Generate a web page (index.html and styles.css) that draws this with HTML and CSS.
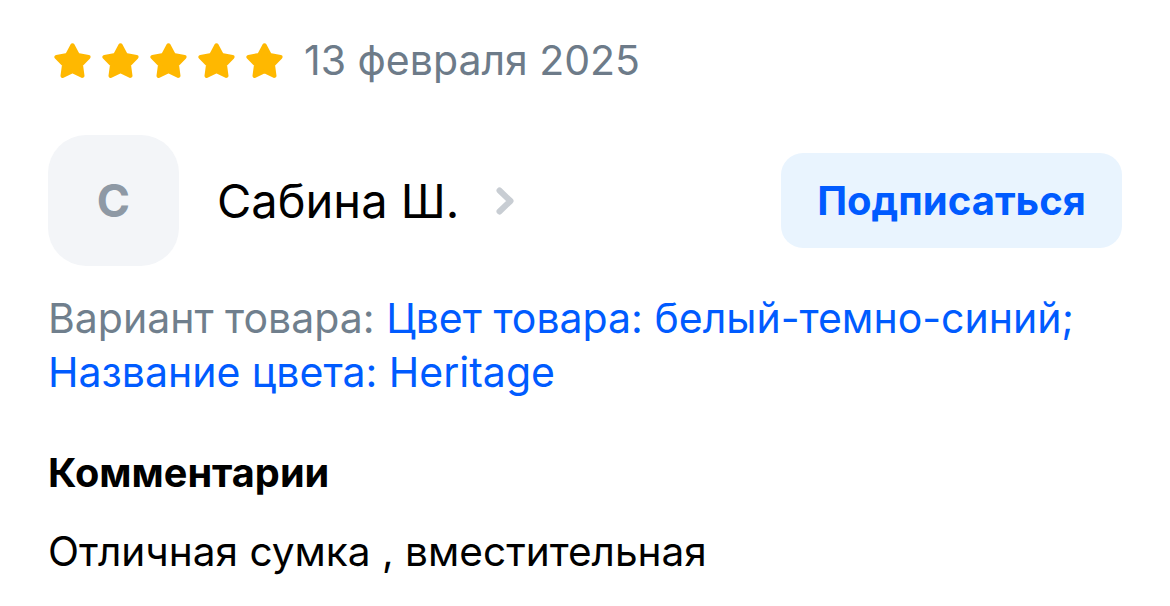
FILE: index.html
```html
<!DOCTYPE html>
<html lang="ru">
<head>
  <meta charset="UTF-8" />
  <title>Отзыв</title>
  <link rel="stylesheet" href="styles.css">
</head>
<body>
  <div class="review">
    <div class="rating-row">
      <div class="stars">
        <svg class="star" viewBox="-2 -2.8 44 41.6"><polygon points="20,0 26.17,11.51 39.02,13.82 29.99,23.24 31.76,36.18 20,30.5 8.24,36.18 10.01,23.24 0.98,13.82 13.83,11.51"/></svg>
        <svg class="star" viewBox="-2 -2.8 44 41.6"><polygon points="20,0 26.17,11.51 39.02,13.82 29.99,23.24 31.76,36.18 20,30.5 8.24,36.18 10.01,23.24 0.98,13.82 13.83,11.51"/></svg>
        <svg class="star" viewBox="-2 -2.8 44 41.6"><polygon points="20,0 26.17,11.51 39.02,13.82 29.99,23.24 31.76,36.18 20,30.5 8.24,36.18 10.01,23.24 0.98,13.82 13.83,11.51"/></svg>
        <svg class="star" viewBox="-2 -2.8 44 41.6"><polygon points="20,0 26.17,11.51 39.02,13.82 29.99,23.24 31.76,36.18 20,30.5 8.24,36.18 10.01,23.24 0.98,13.82 13.83,11.51"/></svg>
        <svg class="star" viewBox="-2 -2.8 44 41.6"><polygon points="20,0 26.17,11.51 39.02,13.82 29.99,23.24 31.76,36.18 20,30.5 8.24,36.18 10.01,23.24 0.98,13.82 13.83,11.51"/></svg>
      </div>
      <span class="date">13 февраля 2025</span>
    </div>

    <div class="author-row">
      <div class="author">
        <div class="avatar">С</div>
        <span class="author-name">Сабина Ш.</span>
        <svg class="chevron" viewBox="0 0 21 30"><path d="M4.5 4.5L15.5 15 4.5 25.5" /></svg>
      </div>
      <button class="subscribe-btn">Подписаться</button>
    </div>

    <p class="variant">
      <span class="variant-label">Вариант товара:</span>
      <span class="variant-value">Цвет товара: белый-темно-синий; Название цвета: Heritage</span>
    </p>

    <h3 class="comments-title">Комментарии</h3>
    <p class="comment-text">Отличная сумка , вместительная</p>
  </div>
</body>
</html>
```

FILE: styles.css
```css
body { margin: 0; background: #fff; font-family: Inter, "Noto Sans", sans-serif; color: #000; }
.review { padding: 35px 48px 0 48px; }

.rating-row { display: flex; align-items: center; gap: 21px; }
.stars { display: flex; gap: 11px; margin-left: 6px; }
.star { width: 37px; height: 35px; fill: #ffb800; stroke: #ffb800; stroke-width: 5; stroke-linejoin: round; }
.date { font-size: 41px; color: #6d7b89; }

.author-row { display: flex; align-items: center; justify-content: space-between; margin-top: 50px; }
.author { display: flex; align-items: center; }
.avatar {
  width: 131px; height: 131px; border-radius: 38px; background: #f3f5f8;
  display: flex; align-items: center; justify-content: center;
  font-size: 45px; font-weight: 700; color: #8e99a5;
}
.author-name { font-size: 47px; margin-left: 38px; }
.chevron { width: 21px; height: 30px; margin-left: 36px; fill: none; stroke: #c8cdd3; stroke-width: 6; stroke-linecap: round; stroke-linejoin: round; }

.subscribe-btn {
  width: 341px; height: 95px; border: none; border-radius: 22px; background: #e9f4fe;
  font-family: Inter, sans-serif; font-size: 40px; font-weight: 700; color: #005bff; cursor: pointer;
}

.variant { margin: 25px 0 0 0; font-size: 41px; line-height: 54px; max-width: 1074px; }
.variant-label { color: #707f8d; }
.variant-value { color: #005bff; }

.comments-title { margin: 50px 0 0 0; font-size: 39.7px; font-weight: 700; }
.comment-text { margin: 30px 0 0 0; font-size: 40.6px; }
```
